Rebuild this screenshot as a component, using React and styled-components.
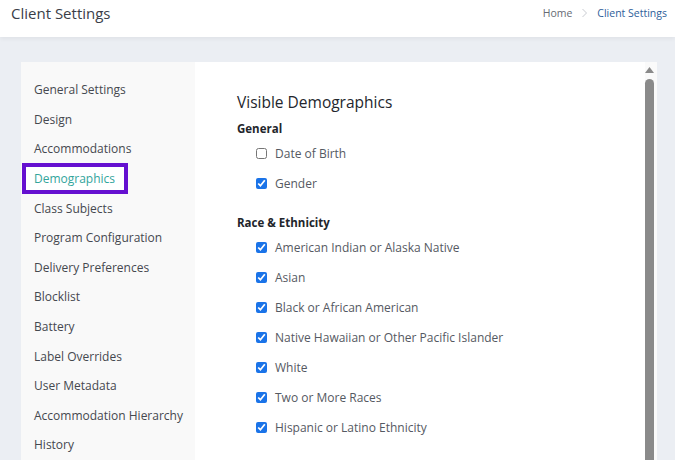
import React from 'react';
import styled, { createGlobalStyle } from 'styled-components';

const GlobalStyle = createGlobalStyle`
  html, body {
    margin: 0;
    padding: 0;
    height: 460px;
    overflow: hidden;
    background: #ebeef3;
    font-family: 'Open Sans', 'DejaVu Sans', sans-serif;
  }
`;

const Page = styled.div`
  display: flex;
  flex-direction: column;
  height: 460px;
`;

const Header = styled.header`
  height: 37px;
  flex-shrink: 0;
  background: #fff;
  display: flex;
  align-items: center;
  justify-content: space-between;
  padding: 0 8px 0 11px;
  box-shadow: 0 2px 4px rgba(0, 0, 0, 0.05);
  position: relative;
  z-index: 1;

  h1 {
    margin: 0;
    font-size: 15px;
    font-weight: 400;
    color: #3a3e48;
    margin-top: -11px;
  }
`;

const Crumbs = styled.nav`
  display: flex;
  align-items: center;
  gap: 9px;
  font-size: 10.5px;
  margin-top: -11px;

  a {
    color: #666b74;
    text-decoration: none;
  }

  span {
    color: #2d5e9a;
    font-weight: 500;
  }
`;

const Card = styled.div`
  margin: 25px 18px 0 21px;
  flex: 1;
  display: flex;
  min-height: 0;
`;

const Sidebar = styled.aside`
  width: 174px;
  flex-shrink: 0;
  background: #f9f9f9;
  padding-top: 13px;
`;

const NavItem = styled.div`
  width: fit-content;
  height: ${(p) => (p.$active ? '31px' : '29.6px')};
  margin: ${(p) => (p.$active ? '-0.7px 0 -0.7px 1px' : '0 0 0 1px')};
  padding: 0 13px 0 12px;
  display: flex;
  align-items: center;
  white-space: nowrap;
  font-size: 12px;
  color: ${(p) => (p.$active ? '#33a59c' : '#45484f')};
  background: ${(p) => (p.$active ? '#fff' : 'transparent')};
  box-shadow: ${(p) => (p.$active ? 'inset 0 0 0 4px #6510d0' : 'none')};
  box-sizing: border-box;
  cursor: pointer;
`;

const Content = styled.main`
  flex: 1;
  background: #fff;
  padding: 30px 0 0 42px;
`;

const Title = styled.h2`
  margin: 0 0 10px;
  font-size: 15.5px;
  line-height: 20px;
  font-weight: 500;
  color: #23262d;
`;

const GroupTitle = styled.h3`
  margin: ${(p) => (p.$first ? '0' : '18px 0 0')};
  font-size: 11.5px;
  line-height: 14px;
  font-weight: 700;
  color: #22252b;
`;

const Option = styled.label`
  display: flex;
  align-items: center;
  gap: 8px;
  height: 30px;
  padding-left: 19px;
  font-size: 12px;
  color: #555962;

  &:first-of-type {
    margin-top: 2px;
  }

  input {
    width: 11px;
    height: 11px;
    margin: 0;
    accent-color: #1a73e8;
  }
`;

const Track = styled.div`
  width: 12px;
  flex-shrink: 0;
  background: #fafafa;
  display: flex;
  flex-direction: column;
  align-items: flex-start;
  padding: 5px 3px 0 0;
  gap: 6px;
  box-sizing: border-box;
`;

const Thumb = styled.div`
  width: 9px;
  flex: 1;
  background: #8a8a8a;
  border-radius: 5px 5px 0 0;
`;

const sections = [
  'General Settings',
  'Design',
  'Accommodations',
  'Demographics',
  'Class Subjects',
  'Program Configuration',
  'Delivery Preferences',
  'Blocklist',
  'Battery',
  'Label Overrides',
  'User Metadata',
  'Accommodation Hierarchy',
  'History',
];

const groups = [
  {
    title: 'General',
    options: [
      { label: 'Date of Birth', checked: false },
      { label: 'Gender', checked: true },
    ],
  },
  {
    title: 'Race & Ethnicity',
    options: [
      { label: 'American Indian or Alaska Native', checked: true },
      { label: 'Asian', checked: true },
      { label: 'Black or African American', checked: true },
      { label: 'Native Hawaiian or Other Pacific Islander', checked: true },
      { label: 'White', checked: true },
      { label: 'Two or More Races', checked: true },
      { label: 'Hispanic or Latino Ethnicity', checked: true },
    ],
  },
];

export default function App() {
  return (
    <>
      <GlobalStyle />
      <Page>
        <Header>
          <h1>Client Settings</h1>
          <Crumbs>
            <a href="#home">Home</a>
            <svg width="7" height="10" viewBox="0 0 7 10">
              <path d="M1.5 1l4 4-4 4" fill="none" stroke="#c9ccd2" strokeWidth="1" />
            </svg>
            <span>Client Settings</span>
          </Crumbs>
        </Header>
        <Card>
          <Sidebar>
            {sections.map((s) => (
              <NavItem key={s} $active={s === 'Demographics'}>{s}</NavItem>
            ))}
          </Sidebar>
          <Content>
            <Title>Visible Demographics</Title>
            {groups.map((g, i) => (
              <section key={g.title}>
                <GroupTitle $first={i === 0}>{g.title}</GroupTitle>
                {g.options.map((o) => (
                  <Option key={o.label}>
                    <input type="checkbox" defaultChecked={o.checked} />
                    {o.label}
                  </Option>
                ))}
              </section>
            ))}
          </Content>
          <Track>
            <svg width="9" height="6" viewBox="0 0 9 6">
              <path d="M4.5 0L9 6H0z" fill="#8a8a8a" />
            </svg>
            <Thumb />
          </Track>
        </Card>
      </Page>
    </>
  );
}
